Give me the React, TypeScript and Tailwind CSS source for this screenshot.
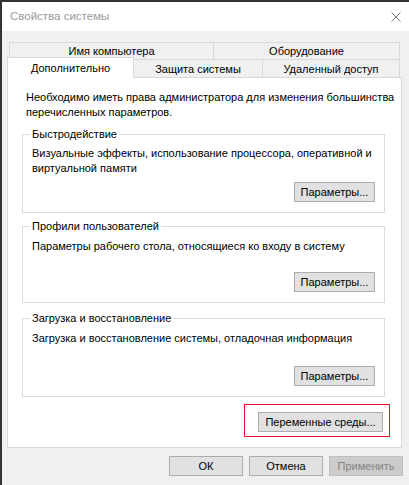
import React from 'react';

const font = "font-['Liberation_Sans',Arial,sans-serif]";

const WinButton: React.FC<{ label: string; width: string; disabled?: boolean }> = ({ label, width, disabled }) => (
  <button
    className={
      'h-[20px] border text-[11px] leading-none flex items-center justify-center ' +
      width +
      (disabled
        ? ' bg-[#cccccc] border-[#bfbfbf] text-[#838383]'
        : ' bg-[#e1e1e1] border-[#adadad] text-black')
    }
  >
    {label}
  </button>
);

const GroupBox: React.FC<{
  title: string;
  lines: string[];
  topGap: string;
  textGap: string;
  buttonGap: string;
}> = ({ title, lines, topGap, textGap, buttonGap }) => (
  <fieldset className={'min-w-0 border border-[#dcdcdc] pl-[9px] pr-[9px] pb-[10px] ' + topGap}>
    <legend className="-ml-[2px] px-[2px] leading-[15px]">{title}</legend>
    <div className={'leading-[15px] whitespace-nowrap ' + textGap}>
      {lines.map((l) => (
        <div key={l}>{l}</div>
      ))}
    </div>
    <div className={'flex justify-end ' + buttonGap}>
      <WinButton label="Параметры..." width="w-[81px]" />
    </div>
  </fieldset>
);

export default function App() {
  return (
    <div
      className={
        'w-[409px] h-[485px] bg-[#f0f0f0] border-t-2 border-l-2 border-[#333333] flex flex-col text-[11px] text-black ' +
        font
      }
    >
      {/* Title bar */}
      <div className="h-[29px] bg-white flex items-center justify-between pl-[8px] pr-[8px]">
        <span className="text-[11.5px] text-[#9a9a9a]">Свойства системы</span>
        <svg width="10" height="10" viewBox="0 0 10 10">
          <path d="M0.5 0.5 L9.5 9.5 M9.5 0.5 L0.5 9.5" stroke="#7a7a7a" strokeWidth="1" fill="none" />
        </svg>
      </div>

      {/* Tabs */}
      <div className="pt-[11px]">
        <div className="ml-[7px] w-[391px] h-[17px] flex">
          <div className="w-[204px] border-l border-t border-[#d9d9d9] flex items-center justify-center">
            Имя компьютера
          </div>
          <div className="flex-1 border-l border-t border-r border-[#d9d9d9] flex items-center justify-center">
            Оборудование
          </div>
        </div>
        <div className="ml-[5px] h-[18px] flex items-end">
          <div className="relative z-10 w-[127px] h-[21px] -mb-px bg-white border-l border-t border-r border-[#d9d9d9] flex items-center justify-center">
            Дополнительно
          </div>
          <div className="w-[129px] h-[18px] border-t border-r border-[#d9d9d9] flex items-center justify-center pt-[2px]">
            Защита системы
          </div>
          <div className="w-[137px] h-[18px] border-t border-r border-[#d9d9d9] flex items-center justify-center pt-[2px]">
            Удаленный доступ
          </div>
        </div>
      </div>

      {/* Panel */}
      <div className="ml-[5px] w-[395px] bg-white border border-[#d9d9d9] pl-[14px] pr-[16px] pt-[12px] pb-[10px] flex flex-col">
        <p className="ml-[4px] leading-[15px] whitespace-nowrap">
          Необходимо иметь права администратора для изменения большинства
          <br />
          перечисленных параметров.
        </p>

        <GroupBox
          title="Быстродействие"
          lines={['Визуальные эффекты, использование процессора, оперативной и', 'виртуальной памяти']}
          topGap="mt-[7px]"
          textGap="mt-[4px]"
          buttonGap="mt-[6px]"
        />
        <GroupBox
          title="Профили пользователей"
          lines={['Параметры рабочего стола, относящиеся ко входу в систему']}
          topGap="mt-[6px]"
          textGap="mt-[5px]"
          buttonGap="mt-[18px]"
        />
        <GroupBox
          title="Загрузка и восстановление"
          lines={['Загрузка и восстановление системы, отладочная информация']}
          topGap="mt-[8px]"
          textGap="mt-[5px]"
          buttonGap="mt-[20px]"
        />

        <div className="mt-[7px] -mr-[5px] self-end border border-[#e81123] pt-[7px] pb-[4px] pl-[13px] pr-[6px]">
          <WinButton label="Переменные среды..." width="w-[125px]" />
        </div>
      </div>

      {/* Dialog buttons */}
      <div className="mt-[8px] mr-[6px] flex justify-end gap-[6px]">
        <WinButton label="ОК" width="w-[74px]" />
        <WinButton label="Отмена" width="w-[74px]" />
        <WinButton label="Применить" width="w-[74px]" disabled />
      </div>
    </div>
  );
}
